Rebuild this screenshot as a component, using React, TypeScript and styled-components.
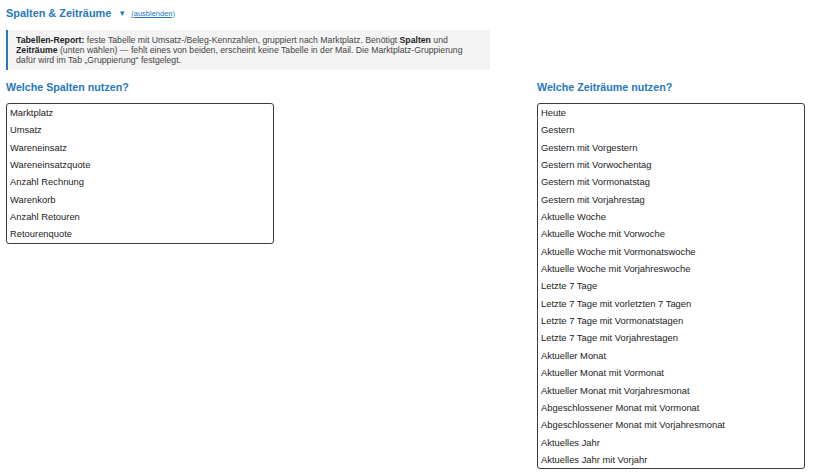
import React from 'react';
import styled, { createGlobalStyle } from 'styled-components';

const GlobalStyle = createGlobalStyle`
  html, body {
    margin: 0;
    padding: 0;
    background: #ffffff;
  }
  body {
    font-family: 'Liberation Sans', Arial, sans-serif;
    color: #222222;
  }
`;

const Page = styled.div`
  padding: 5px 30px 6px 6px;
`;

const SectionHeader = styled.div`
  display: flex;
  align-items: center;
  height: 16px;
`;

const SectionTitle = styled.h2`
  margin: 0;
  font-size: 10.9px;
  font-weight: bold;
  color: #2677c0;
`;

const Caret = styled.span`
  font-size: 8px;
  color: #2677c0;
  margin: 0 5px 0 7px;
`;

const ToggleLink = styled.a`
  font-size: 7.5px;
  color: #2677c0;
  text-decoration: underline;
  cursor: pointer;
`;

const InfoBox = styled.div`
  margin-top: 9px;
  width: 466px;
  background: #f4f4f4;
  border-left: 2px solid #2677c0;
  padding: 5px 8px 5px 8px;
  font-size: 8.7px;
  line-height: 10px;
  color: #444444;

  b {
    color: #222222;
  }
`;

const Columns = styled.div`
  display: flex;
  justify-content: space-between;
  margin-top: 10px;
`;

const Column = styled.div`
  display: flex;
  flex-direction: column;
  width: 268px;
`;

const ColumnTitle = styled.h3`
  margin: 0 0 9px 0;
  font-size: 10.7px;
  line-height: 14px;
  font-weight: bold;
  color: #2677c0;
`;

const ListBox = styled.div`
  border: 1px solid #3c3c3c;
  border-radius: 3px;
  background: #ffffff;
`;

const Option = styled.div`
  height: 17.35px;
  line-height: 17.35px;
  padding-left: 3px;
  font-size: 9.4px;
  color: #222222;
  white-space: nowrap;
`;

const columns = [
  'Marktplatz',
  'Umsatz',
  'Wareneinsatz',
  'Wareneinsatzquote',
  'Anzahl Rechnung',
  'Warenkorb',
  'Anzahl Retouren',
  'Retourenquote',
];

const periods = [
  'Heute',
  'Gestern',
  'Gestern mit Vorgestern',
  'Gestern mit Vorwochentag',
  'Gestern mit Vormonatstag',
  'Gestern mit Vorjahrestag',
  'Aktuelle Woche',
  'Aktuelle Woche mit Vorwoche',
  'Aktuelle Woche mit Vormonatswoche',
  'Aktuelle Woche mit Vorjahreswoche',
  'Letzte 7 Tage',
  'Letzte 7 Tage mit vorletzten 7 Tagen',
  'Letzte 7 Tage mit Vormonatstagen',
  'Letzte 7 Tage mit Vorjahrestagen',
  'Aktueller Monat',
  'Aktueller Monat mit Vormonat',
  'Aktueller Monat mit Vorjahresmonat',
  'Abgeschlossener Monat mit Vormonat',
  'Abgeschlossener Monat mit Vorjahresmonat',
  'Aktuelles Jahr',
  'Aktuelles Jahr mit Vorjahr',
];

export default function App() {
  return (
    <>
      <GlobalStyle />
      <Page>
        <SectionHeader>
          <SectionTitle>Spalten &amp; Zeiträume</SectionTitle>
          <Caret>▼</Caret>
          <ToggleLink>(ausblenden)</ToggleLink>
        </SectionHeader>
        <InfoBox>
          <b>Tabellen-Report:</b> feste Tabelle mit Umsatz-/Beleg-Kennzahlen,
          gruppiert nach Marktplatz. Benötigt <b>Spalten</b> und
          <br />
          <b>Zeiträume</b> (unten wählen) — fehlt eines von beiden, erscheint
          keine Tabelle in der Mail. Die Marktplatz-Gruppierung
          <br />
          dafür wird im Tab „Gruppierung“ festgelegt.
        </InfoBox>
        <Columns>
          <Column>
            <ColumnTitle>Welche Spalten nutzen?</ColumnTitle>
            <ListBox role="listbox" aria-multiselectable="true">
              {columns.map((c) => (
                <Option key={c} role="option">
                  {c}
                </Option>
              ))}
            </ListBox>
          </Column>
          <Column>
            <ColumnTitle>Welche Zeiträume nutzen?</ColumnTitle>
            <ListBox role="listbox" aria-multiselectable="true">
              {periods.map((p) => (
                <Option key={p} role="option">
                  {p}
                </Option>
              ))}
            </ListBox>
          </Column>
        </Columns>
      </Page>
    </>
  );
}
